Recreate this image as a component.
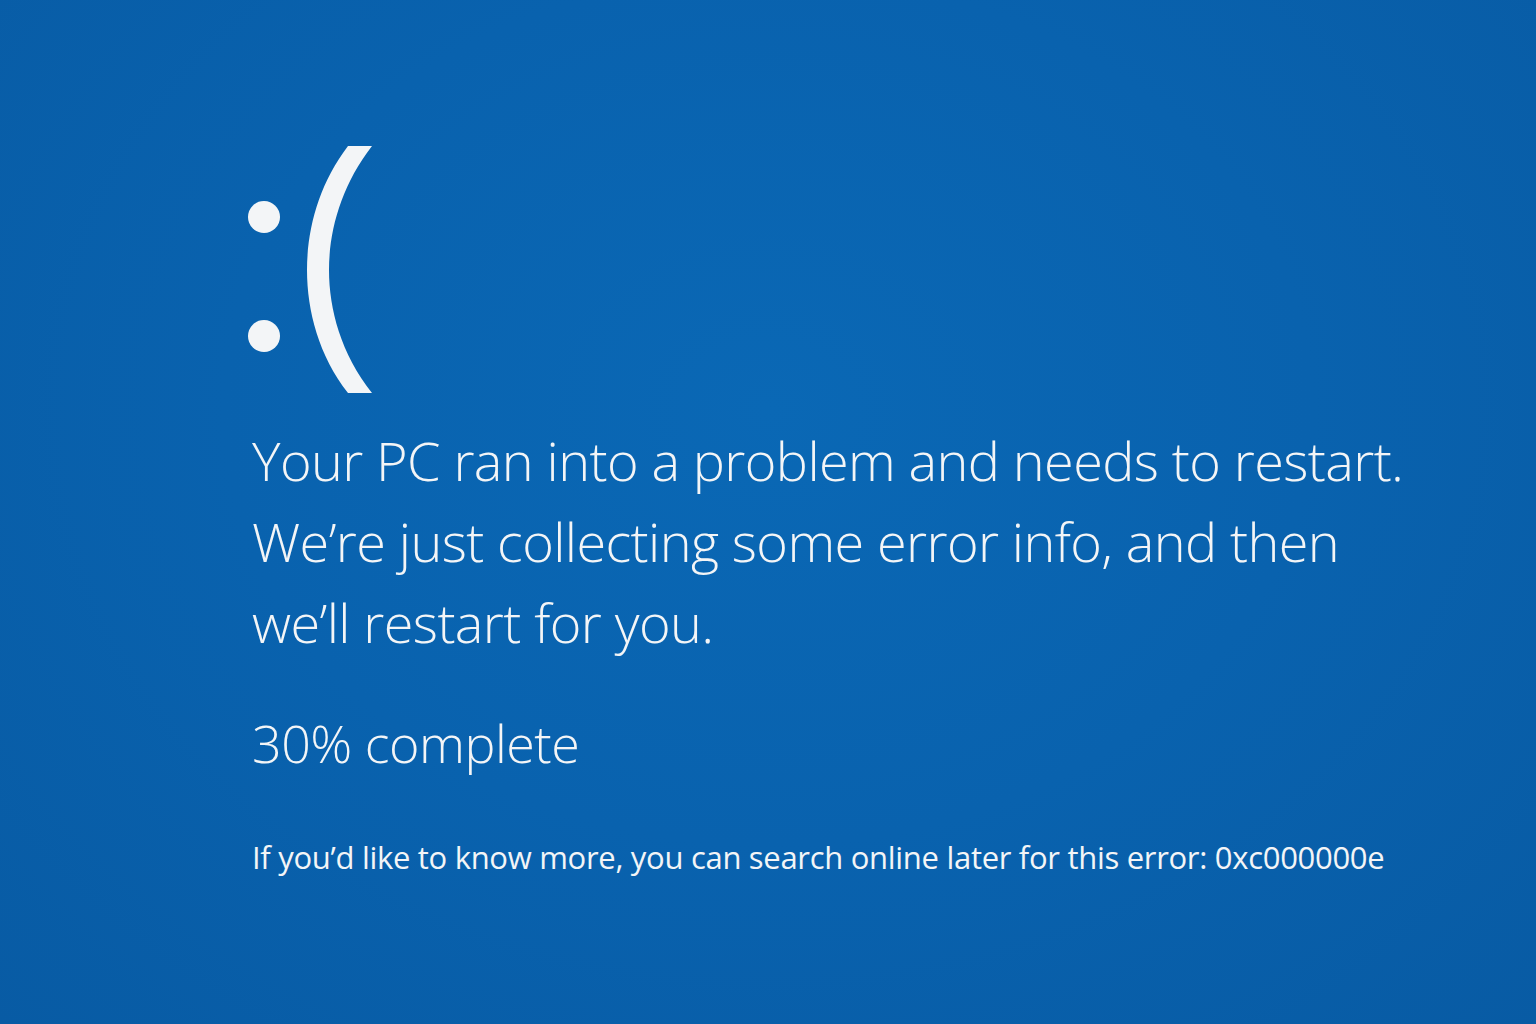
import React from 'react';

const Frown: React.FC = () => (
  <svg width="126" height="248" viewBox="0 0 126 248" className="block">
    <circle cx="17" cy="71" r="16" fill="#f3f5f7" />
    <circle cx="17" cy="190" r="16" fill="#f3f5f7" />
    <path
      d="M101 0 L125 0 C94 40 82 85 82 124 C82 163 94 208 125 247 L101 247 C72 210 60 165 60 124 C60 83 72 38 101 0 Z"
      fill="#f3f5f7"
    />
  </svg>
);

const App: React.FC = () => {
  return (
    <div
      className="w-[1536px] h-[1024px] overflow-hidden bg-[radial-gradient(ellipse_at_50%_40%,#0a68b5_0%,#0962ae_50%,#085ba4_100%)] text-[#f3f5f7]"
      style={{ fontFamily: '"Open Sans", "Noto Sans", sans-serif' }}
    >
      <div className="pl-[247px] pt-[146px]">
        <Frown />
        <div className="pl-[5px] mt-[26px] text-[54px] leading-[81px] font-light tracking-[-0.6px]">
          <div>Your PC ran into a problem and needs to restart.</div>
          <div>We’re just collecting some error info, and then</div>
          <div>we’ll restart for you.</div>
        </div>
        <div className="pl-[5px] mt-[40px] text-[52px] leading-[80px] font-light tracking-[-0.5px]">30% complete</div>
        <div className="pl-[5px] mt-[54px] text-[31px] leading-[40px] font-normal tracking-[-0.3px]">
          If you’d like to know more, you can search online later for this error: 0xc000000e
        </div>
      </div>
    </div>
  );
};

export default App;
